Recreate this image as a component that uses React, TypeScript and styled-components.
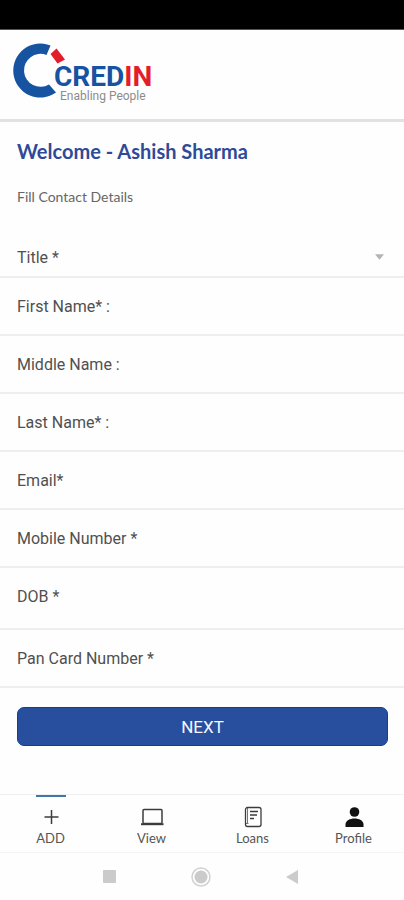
import React from "react";
import styled, { createGlobalStyle } from "styled-components";

const GlobalStyle = createGlobalStyle`
  *, *::before, *::after { box-sizing: border-box; }
  body { margin: 0; background: #fefefe; font-family: Roboto, sans-serif; color: #505050; }
`;

const Screen = styled.div`
  min-height: 100vh;
  display: flex;
  flex-direction: column;
`;

const StatusBar = styled.div`
  height: 30px;
  background: #000;
  border-bottom: 1px solid #555;
`;

const Header = styled.header`
  height: 92px;
  padding: 13px 14px;
  border-bottom: 3px solid #e2e2e2;
`;

const Logo = styled.div`
  display: flex;
  align-items: flex-start;
`;

const Mark = styled.svg`
  width: 40px;
  height: 55px;
  overflow: visible;
`;

const Wordmark = styled.div`
  padding-top: 22px;
`;

const Brand = styled.div`
  font: 700 28px/24px Roboto, sans-serif;
  color: #1653a0;
`;

const BrandAccent = styled.span`
  color: #e21d2c;
`;

const Tagline = styled.div`
  padding-left: 6px;
  font: 400 12px/14px Roboto, sans-serif;
  color: #8c8c8c;
`;

const Main = styled.main`
  flex: 1;
`;

const Intro = styled.div`
  padding: 16px 17px 0;
`;

const Welcome = styled.h1`
  margin: 0;
  font: 700 20px/26px Lato, sans-serif;
  color: #2f4a98;
`;

const Subtitle = styled.p`
  margin: 22px 0 30px;
  font: 400 14px/22px Lato, sans-serif;
  color: #666;
`;

const Field = styled.div<{ $tall?: boolean }>`
  display: flex;
  align-items: center;
  height: ${({ $tall }) => ($tall ? 62 : 58)}px;
  padding: 0 17px ${({ $tall }) => ($tall ? 4 : 0)}px;
  border-bottom: 2px solid #eeeeee;
`;

const SelectField = styled(Field)`
  height: 40px;
`;

const Label = styled.label`
  flex: none;
  font-size: 16px;
  line-height: 22px;
  padding-top: 2px;
`;

const TextInput = styled.input`
  flex: 1;
  min-width: 0;
  height: 32px;
  border: 0;
  outline: 0;
  padding: 0 8px;
  background: transparent;
  font: 400 16px Roboto, sans-serif;
  color: #333;
`;

const Select = styled.select`
  flex: 1;
  min-width: 0;
  height: 32px;
  border: 0;
  outline: 0;
  padding: 0 8px;
  appearance: none;
  background: transparent;
  font: 400 16px Roboto, sans-serif;
  color: #333;
`;

const Caret = styled.svg`
  width: 9px;
  height: 6px;
  margin-right: 3px;
  pointer-events: none;
`;

const Actions = styled.div`
  padding: 19px 16px 0 17px;
`;

const NextButton = styled.button`
  width: 100%;
  height: 39px;
  border: 1px solid #173d91;
  border-radius: 7px;
  background: #284f9d;
  color: #f4f7ff;
  font: 400 17px/24px Roboto, sans-serif;
  cursor: pointer;
`;

const TabBar = styled.nav`
  display: grid;
  grid-template-columns: repeat(4, 1fr);
  height: 59px;
  border-top: 1px solid #f0f0f0;
  border-bottom: 1px solid #f5f5f5;
`;

const Tab = styled.a`
  display: flex;
  flex-direction: column;
  align-items: center;
  font: 400 13px/18px Lato, sans-serif;
  color: #555;
  text-decoration: none;
`;

const Indicator = styled.span<{ $active?: boolean }>`
  width: 30px;
  height: 2px;
  margin-bottom: 8px;
  background: ${({ $active }) => ($active ? "#3f78a8" : "transparent")};
`;

const TabIcon = styled.svg`
  width: 24px;
  height: 24px;
  fill: none;
  stroke: #3c3c3c;
  stroke-width: 1.5;
`;

const SystemBar = styled.div`
  display: flex;
  justify-content: space-between;
  align-items: center;
  height: 47px;
  padding: 0 105px 0 103px;
`;

const SystemButton = styled.button`
  display: flex;
  padding: 0;
  border: 0;
  background: transparent;
`;

const SystemIcon = styled.svg<{ $size: number }>`
  width: ${({ $size }) => $size}px;
  height: ${({ $size }) => $size}px;
  fill: #cbcbcb;
`;

const textFields = [
  { id: "first-name", label: "First Name* :" },
  { id: "middle-name", label: "Middle Name :" },
  { id: "last-name", label: "Last Name* :" },
  { id: "email", label: "Email*", type: "email" },
  { id: "mobile", label: "Mobile Number *", type: "tel" },
  { id: "dob", label: "DOB *", tall: true },
  { id: "pan", label: "Pan Card Number *" },
];

const tabs = [
  { label: "ADD", active: true, icon: <path d="M12.5 5v14M5.5 12h14" /> },
  {
    label: "View",
    icon: (
      <>
        <rect x="3" y="4.5" width="19" height="14" rx="1" />
        <path d="M1 19.2h22.5" strokeWidth="2" />
      </>
    ),
  },
  {
    label: "Loans",
    icon: (
      <>
        <rect x="4.5" y="2.5" width="15.5" height="19" rx="2" strokeWidth="1.3" />
        <path d="M6.5 3v15M4.5 18.5h3" strokeWidth="0.7" />
        <path d="M9 6.5h8M9 10h7M9 13.5h4" strokeWidth="1.3" />
      </>
    ),
  },
  {
    label: "Profile",
    icon: (
      <g fill="#111" stroke="none">
        <circle cx="12.5" cy="7" r="4.8" />
        <path d="M3.5 22v-2.5c0-4 4.5-6 9-6s9 2 9 6V22Z" />
      </g>
    ),
  },
];

export default function App() {
  return (
    <Screen>
      <GlobalStyle />
      <StatusBar />
      <Header>
        <Logo>
          <Mark viewBox="0 0 40 55" aria-hidden="true">
            <path
              fill="#1653a0"
              d="M36.5 2.6A27 27 0 1 0 42 49.5L35 41.5A16.5 16.5 0 1 1 32.5 12Z"
            />
            <path fill="#e21d2c" d="M36.5 11 42.5 5.5 51 16.5 43.5 20.5Z" />
          </Mark>
          <Wordmark>
            <Brand>
              CRED<BrandAccent>IN</BrandAccent>
            </Brand>
            <Tagline>Enabling People</Tagline>
          </Wordmark>
        </Logo>
      </Header>
      <Main>
        <Intro>
          <Welcome>Welcome - Ashish Sharma</Welcome>
          <Subtitle>Fill Contact Details</Subtitle>
        </Intro>
        <form onSubmit={(e) => e.preventDefault()}>
          <SelectField>
            <Label htmlFor="title">Title *</Label>
            <Select id="title" defaultValue="">
              <option value="" />
              <option>Mr</option>
              <option>Mrs</option>
              <option>Ms</option>
            </Select>
            <Caret viewBox="0 0 10 6" aria-hidden="true">
              <path d="M0 0h10L5 6Z" fill="#b4b4b4" />
            </Caret>
          </SelectField>
          {textFields.map((f) => (
            <Field key={f.id} $tall={f.tall}>
              <Label htmlFor={f.id}>{f.label}</Label>
              <TextInput id={f.id} type={f.type ?? "text"} />
            </Field>
          ))}
          <Actions>
            <NextButton type="submit">NEXT</NextButton>
          </Actions>
        </form>
      </Main>
      <TabBar>
        {tabs.map((t) => (
          <Tab key={t.label} href="#" aria-current={t.active ? "page" : undefined}>
            <Indicator $active={t.active} />
            <TabIcon viewBox="0 0 24 24" aria-hidden="true">
              {t.icon}
            </TabIcon>
            {t.label}
          </Tab>
        ))}
      </TabBar>
      <SystemBar>
        <SystemButton aria-label="Recent apps">
          <SystemIcon $size={13} viewBox="0 0 13 13">
            <rect width="13" height="13" rx="1" />
          </SystemIcon>
        </SystemButton>
        <SystemButton aria-label="Home">
          <SystemIcon $size={20} viewBox="0 0 20 20">
            <circle cx="10" cy="10" r="9" fill="none" stroke="#d2d2d2" strokeWidth="1.5" />
            <circle cx="10" cy="10" r="6.5" />
          </SystemIcon>
        </SystemButton>
        <SystemButton aria-label="Back">
          <SystemIcon $size={14} viewBox="0 0 14 14">
            <path d="M13 0v14L1 7Z" />
          </SystemIcon>
        </SystemButton>
      </SystemBar>
    </Screen>
  );
}
